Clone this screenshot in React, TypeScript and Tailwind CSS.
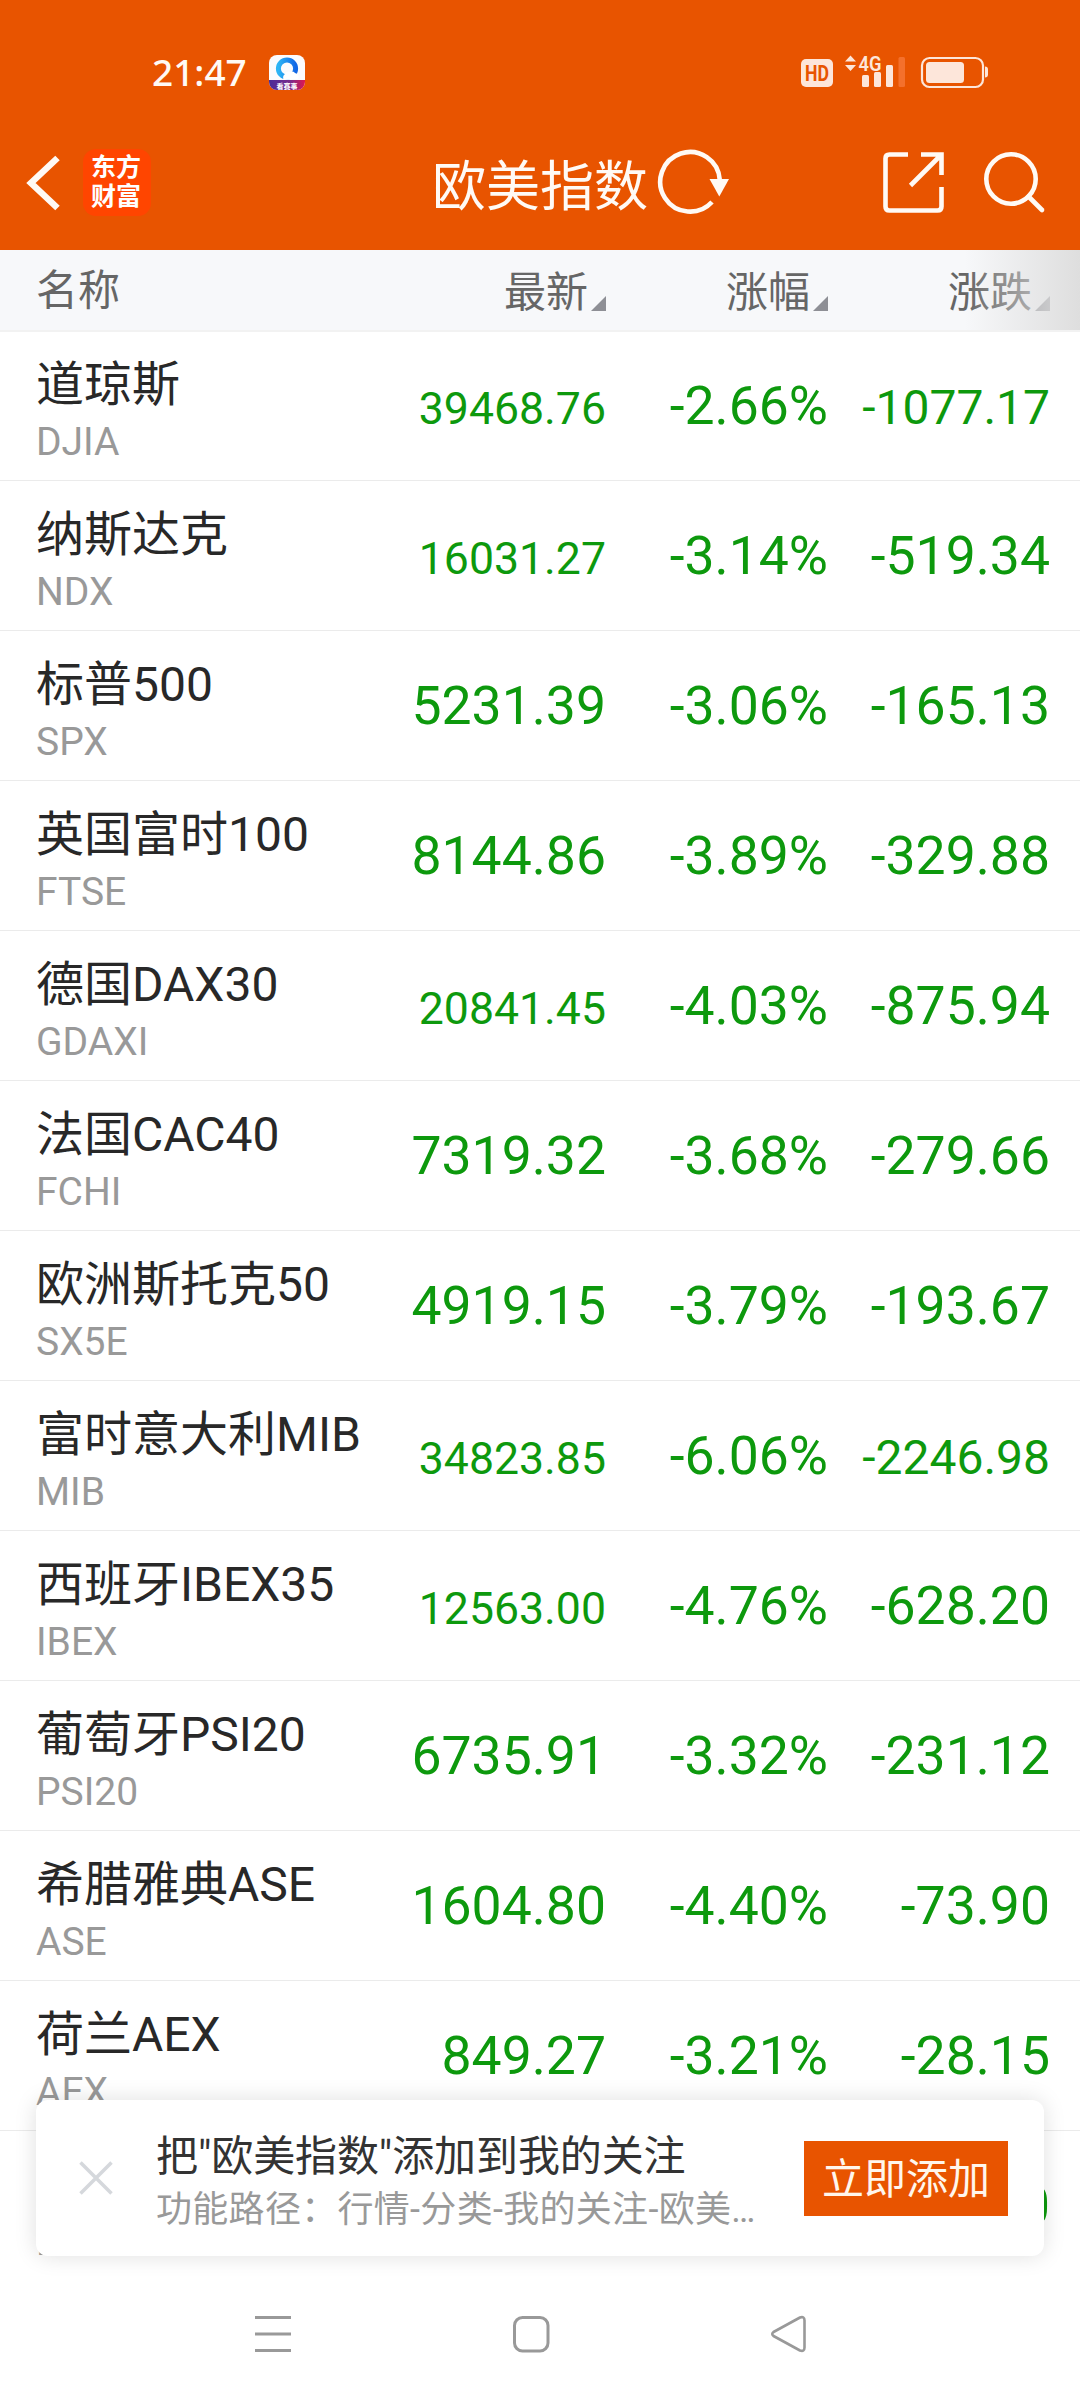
import clsx from "clsx";

interface IndexQuote {
    name?: string;
    code: string;
    price?: string;
    percent?: string;
    change: string;
}

const quotes: IndexQuote[] = [
    { name: "道琼斯", code: "DJIA", price: "39468.76", percent: "-2.66%", change: "-1077.17" },
    { name: "纳斯达克", code: "NDX", price: "16031.27", percent: "-3.14%", change: "-519.34" },
    { name: "标普500", code: "SPX", price: "5231.39", percent: "-3.06%", change: "-165.13" },
    { name: "英国富时100", code: "FTSE", price: "8144.86", percent: "-3.89%", change: "-329.88" },
    { name: "德国DAX30", code: "GDAXI", price: "20841.45", percent: "-4.03%", change: "-875.94" },
    { name: "法国CAC40", code: "FCHI", price: "7319.32", percent: "-3.68%", change: "-279.66" },
    { name: "欧洲斯托克50", code: "SX5E", price: "4919.15", percent: "-3.79%", change: "-193.67" },
    { name: "富时意大利MIB", code: "MIB", price: "34823.85", percent: "-6.06%", change: "-2246.98" },
    { name: "西班牙IBEX35", code: "IBEX", price: "12563.00", percent: "-4.76%", change: "-628.20" },
    { name: "葡萄牙PSI20", code: "PSI20", price: "6735.91", percent: "-3.32%", change: "-231.12" },
    { name: "希腊雅典ASE", code: "ASE", price: "1604.80", percent: "-4.40%", change: "-73.90" },
    { name: "荷兰AEX", code: "AEX", price: "849.27", percent: "-3.21%", change: "-28.15" },
    { code: "B", change: "0" },
];

function StatusBar() {
    return (
        <div className="flex h-[146px] items-start pl-[152px] pr-[92px] pt-[54px]">
            <span className="-mt-[2px] h-10 w-[117px] font-['Noto_Sans'] text-[37px] font-medium leading-[40px] text-[#fffaf5]">21:47</span>
            <svg className="mt-[1px]" width="36" height="36" viewBox="0 0 36 36">
                <defs>
                    <clipPath id="tile">
                        <rect width="36" height="35" rx="8" />
                    </clipPath>
                    <linearGradient id="ring" x1="0" y1="0" x2="1" y2="0">
                        <stop offset="0" stopColor="#2cb4f5" />
                        <stop offset="1" stopColor="#1267e6" />
                    </linearGradient>
                    <linearGradient id="band" x1="0" y1="0" x2="1" y2="0">
                        <stop offset="0" stopColor="#4a2c98" />
                        <stop offset="0.6" stopColor="#7a2a8c" />
                        <stop offset="1" stopColor="#e0184f" />
                    </linearGradient>
                </defs>
                <g clipPath="url(#tile)">
                    <rect width="36" height="36" fill="#fbfbfd" />
                    <circle cx="18" cy="13.5" r="8.6" fill="none" stroke="url(#ring)" strokeWidth="5" />
                    <path d="M15 25a4 4 0 0 1 1-6 5 5 0 0 1 6-2 3 3 0 0 1 4 1 4 4 0 0 1 3 6z" fill="#fff" />
                    <rect y="25" width="36" height="11" fill="url(#band)" />
                    <text x="18" y="33.5" textAnchor="middle" fontSize="7" fontWeight="700" fill="#fff">
                        看赛事
                    </text>
                </g>
            </svg>
            <svg className="ml-auto" width="188" height="36" viewBox="800 54 188 36" fill="#fde6da">
                <rect x="801" y="59" width="32" height="28" rx="5" />
                <text x="817" y="81" textAnchor="middle" fontSize="22" fontWeight="700" fill="#e85400" textLength="24" lengthAdjust="spacingAndGlyphs">
                    HD
                </text>
                <path d="M845 61.5l5.5-6 5.5 6zM845 65h11l-5.5 6z" />
                <text x="858.5" y="70.5" fontSize="21" fontWeight="600" textLength="23" lengthAdjust="spacingAndGlyphs">
                    4G
                </text>
                <rect x="862" y="75" width="7" height="12" rx="1.5" />
                <rect x="874" y="72" width="7" height="15" rx="1.5" />
                <rect x="886" y="65" width="7" height="22" rx="1.5" />
                <rect x="898.5" y="57" width="6.5" height="30" rx="1.5" fill="#f4702c" />
                <rect x="922" y="58" width="61" height="29" rx="7.5" fill="none" stroke="#fde6da" strokeWidth="2.2" />
                <rect x="926" y="62" width="38" height="21" rx="3.5" />
                <path d="M985 66.5q3 0 3 3v5q0 3-3 3z" />
            </svg>
        </div>
    );
}

function NavBar() {
    return (
        <div className="flex h-[104px] items-start pl-[26px] pr-[34px]">
            <svg className="mt-[8px]" width="36" height="58" viewBox="0 0 36 58" fill="none" stroke="#fffaf5" strokeWidth="6.5">
                <path d="M31.5 4L5 29l26.5 25" />
            </svg>
            <div className="ml-[21px] mt-[3px] flex h-[67px] w-[68px] flex-col items-center justify-center rounded-[13px] bg-[#ff4500] pb-[1px] pr-[2px] text-[25px] font-bold leading-[29px] text-white">
                <span>东方</span>
                <span>财富</span>
            </div>
            <h1 className="ml-[281px] mt-[2px] text-[54px] leading-[80px] text-[#fffaf5]">欧美指数</h1>
            <svg className="ml-[8px] mt-[2px]" width="76" height="68" viewBox="656 148 76 68">
                <path d="M719.8 180A29.8 29.8 0 1 0 712 202" fill="none" stroke="#fffaf5" strokeWidth="4.6" />
                <path d="M709.5 179h19.5l-9.7 17.5z" fill="#fffaf5" />
            </svg>
            <svg className="ml-auto mt-[4px]" width="166" height="66" viewBox="880 150 166 66" fill="none" stroke="#fffaf5" strokeWidth="4.6">
                <path d="M908 154.5h-18.5q-4 0-4 4v48q0 4 4 4h48q4 0 4-4V187" />
                <path d="M921 154.5h20.5V175M941 155l-30.5 30.5" />
                <circle cx="1011" cy="179" r="24.7" />
                <path d="M1028.5 196.5l13.5 13.5" strokeLinecap="round" />
            </svg>
        </div>
    );
}

function SortLabel({ label }: { label: string }) {
    return (
        <div className="mt-[13px] flex w-[222px] items-end justify-end gap-[3px]">
            <span className="leading-[60px]">{label}</span>
            <svg className="mb-[12px]" width="15" height="15" viewBox="0 0 15 15" fill="#8e8f95">
                <path d="M15 0v15H0z" />
            </svg>
        </div>
    );
}

function TableHead() {
    return (
        <div className="relative flex h-[82px] items-start border-b-2 border-[#f2f2f2] bg-[#f7f8fa] pl-[36px] text-[42px] text-[#666]">
            <span className="mt-[11px] w-[348px] leading-[60px]">名称</span>
            <SortLabel label="最新" />
            <SortLabel label="涨幅" />
            <SortLabel label="涨跌" />
            <div className="absolute inset-y-0 right-0 w-[115px] bg-gradient-to-r from-[#dedede]/0 to-[#dedede]" />
        </div>
    );
}

function QuoteRow({ quote }: { quote: IndexQuote }) {
    const longPrice = (quote.price?.length ?? 0) > 7;
    const longChange = quote.change.length > 7;

    // long values drop to a smaller size so that they stay in their column
    return (
        <div className="flex h-[150px] items-start border-b border-[#ebebeb] pl-[36px]">
            <div className="w-[348px] whitespace-nowrap">
                <p className="mt-[20px] h-[68px] text-[48px] leading-[68px] text-[#282828]">{quote.name}</p>
                <p className="h-[46px] text-[39px] leading-[46px] text-[#999]">{quote.code}</p>
            </div>
            <div className="mt-[35px] flex h-[80px] items-baseline leading-[80px] text-[#0d990d]">
                <span className={clsx("w-[222px] text-right", longPrice ? "text-[44.6px]" : "text-[53.5px]")}>
                    {quote.price}
                </span>
                <span className="w-[222px] text-right text-[53.5px]">{quote.percent}</span>
                <span className={clsx("w-[222px] text-right", longChange ? "text-[48px]" : "text-[53.5px]")}>
                    {quote.change}
                </span>
            </div>
        </div>
    );
}

function FollowPrompt() {
    return (
        <div className="absolute left-[36px] top-[2100px] flex h-[156px] w-[1008px] items-center rounded-[12px] bg-white pl-[43px] pr-[36px] shadow-[0_0_22px_rgba(0,0,0,0.13)]">
            <svg width="34" height="34" viewBox="0 0 34 34" stroke="#d5d8dc" strokeWidth="3.5">
                <path d="M1.5 1.5l31 31M32.5 1.5l-31 31" />
            </svg>
            <div className="ml-[43px] mt-[10px] w-[604px]">
                <p className="h-[54px] text-[42px] leading-[54px] tracking-[-0.1px] text-[#333]">把"欧美指数"添加到我的关注</p>
                <p className="h-[52px] truncate text-[36px] leading-[52px] tracking-[0.3px] text-[#999]">
                    功能路径：行情-分类-我的关注-欧美指数
                </p>
            </div>
            <button className="ml-auto h-[75px] w-[204px] bg-[#e85400] pt-[3px] text-[42px] leading-[72px] text-[#fff6ec]">
                立即添加
            </button>
        </div>
    );
}

function SystemNav() {
    return (
        <div className="relative flex h-[142px] items-start justify-between bg-white pl-[254px] pr-[272px] pt-[57px]">
            <svg width="38" height="38" viewBox="0 0 38 38" stroke="#999" strokeWidth="3">
                <path d="M1 2.5h36M1 19h36M1 35.5h36" />
            </svg>
            <svg width="38" height="38" viewBox="0 0 38 38" fill="none" stroke="#999" strokeWidth="3">
                <rect x="2.5" y="2.5" width="33.5" height="33.5" rx="8" />
            </svg>
            <svg width="38" height="38" viewBox="0 0 38 38" fill="none" stroke="#999" strokeWidth="2.6" strokeLinejoin="round">
                <path d="M3.5 17L30 2.5q4.5-1.5 4.5 3v27q0 4.5-4.5 3L3.5 21q-2.5-2 0-4z" />
            </svg>
        </div>
    );
}

export default function App() {
    return (
        <div className="relative flex h-[2400px] w-[1080px] flex-col overflow-hidden bg-white font-['Roboto','Noto_Sans_CJK_SC',sans-serif]">
            <header className="h-[250px] bg-[#e85400]">
                <StatusBar />
                <NavBar />
            </header>
            <TableHead />
            <main className="-mt-px h-[1927px] overflow-hidden">
                {quotes.map((quote) => (
                    <QuoteRow key={quote.code} quote={quote} />
                ))}
            </main>
            <SystemNav />
            <FollowPrompt />
        </div>
    );
}
